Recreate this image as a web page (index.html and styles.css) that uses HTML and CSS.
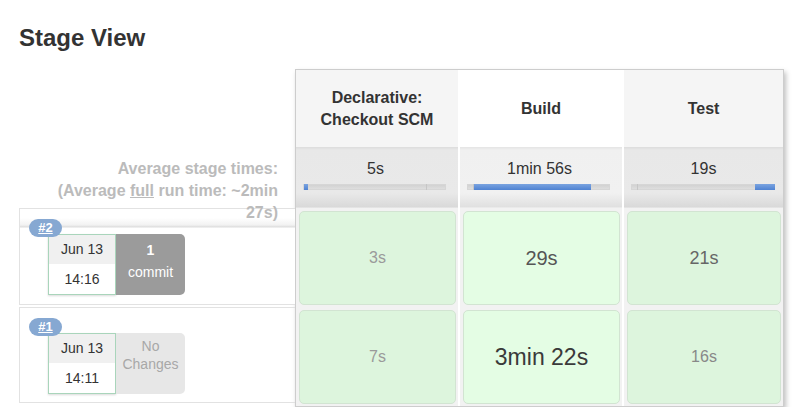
FILE: index.html
```html
<!DOCTYPE html>
<html>
<head>
<meta charset="utf-8">
<link rel="stylesheet" href="styles.css">
</head>
<body>
<h2 class="title">Stage View</h2>
<div class="stage-view">
  <div class="builds">
    <div class="builds-head"></div>
    <div class="avg-label">Average stage times:<br>(Average <u>full</u> run time: ~2min 27s)</div>
    <div class="build-row first">
      <a class="badge">#2</a>
      <div class="build-info">
        <div class="date">
          <div class="date-day">Jun 13</div>
          <div class="date-time">14:16</div>
        </div>
        <div class="changes commit"><b>1</b><br>commit</div>
      </div>
    </div>
    <div class="build-row">
      <a class="badge">#1</a>
      <div class="build-info">
        <div class="date">
          <div class="date-day">Jun 13</div>
          <div class="date-time">14:11</div>
        </div>
        <div class="changes none">No<br>Changes</div>
      </div>
    </div>
  </div>
  <div class="panel">
    <div class="grid">
      <div class="head">Declarative:<br>Checkout SCM</div>
      <div class="head hl">Build</div>
      <div class="head">Test</div>

      <div class="avg"><div class="avg-time">5s</div><div class="bar"><span class="fill" style="left:0;width:4px"></span><span class="mark" style="left:122px"></span></div></div>
      <div class="avg hl"><div class="avg-time">1min 56s</div><div class="bar"><span class="fill" style="left:5px;width:118px"></span><span class="mark" style="left:5px"></span></div></div>
      <div class="avg"><div class="avg-time">19s</div><div class="bar"><span class="fill" style="left:123px;width:20px"></span><span class="mark" style="left:5px"></span></div></div>

      <div class="cell"><div class="box"><span class="v s16 c9">3s</span></div></div>
      <div class="cell hl"><div class="box"><span class="v s20 c5">29s</span></div></div>
      <div class="cell"><div class="box"><span class="v s18 c6">21s</span></div></div>

      <div class="cell"><div class="box"><span class="v s16 c9">7s</span></div></div>
      <div class="cell hl"><div class="box"><span class="v s23 c3">3min 22s</span></div></div>
      <div class="cell"><div class="box"><span class="v s16 c8">16s</span></div></div>
    </div>
  </div>
</div>
</body>
</html>
```
FILE: styles.css
```css
html, body {
  margin: 0;
  padding: 0;
  background: #fff;
  font-family: "Liberation Sans", Arial, sans-serif;
  color: #333;
}

.title {
  margin: 24px 0 17px 19px;
  font-size: 24px;
  line-height: 28px;
  font-weight: bold;
  color: #333;
}

.stage-view {
  display: flex;
  align-items: flex-start;
  padding-left: 19px;
}

.builds {
  width: 276px;
  display: flex;
  flex-direction: column;
  gap: 2px;
}

.builds-head {
  height: 76px;
}

.avg-label {
  position: relative;
  z-index: 3;
  height: 61px;
  margin-bottom: -2px;
  box-sizing: border-box;
  padding: 11px 17px 0 19px;
  text-align: right;
  font-size: 16px;
  line-height: 22px;
  font-weight: bold;
  color: #bbb;
}

.avg-label u {
  text-decoration: underline;
}

.build-row {
  position: relative;
  height: 97px;
  box-sizing: border-box;
  border: 1px solid #e2e2e2;
  border-right: none;
  padding: 25px 0 0 28px;
}

.build-row + .build-row {
  height: 96px;
}

.build-row.first {
  background: linear-gradient(to bottom, #fff 0, #fff 9px, #f2f2f2 16px, #dcdcdc 18px, #fff 19px, #fff 100%);
}

.badge {
  position: absolute;
  left: 9px;
  top: 10px;
  z-index: 2;
  width: 33px;
  height: 18px;
  border-radius: 9px;
  background: #86a8d2;
  color: #fff;
  font-size: 13px;
  line-height: 18px;
  font-weight: bold;
  text-align: center;
  text-decoration: underline;
}

.build-info {
  display: flex;
}

.date {
  width: 68px;
  height: 61px;
  box-sizing: border-box;
  border: 1px solid #a9d5bb;
  box-shadow: 0 1px 2px rgba(0, 0, 0, 0.15);
  font-size: 14px;
  color: #333;
  text-align: center;
}

.date-day {
  height: 29px;
  line-height: 29px;
  background: #f0f0f0;
}

.date-time {
  height: 30px;
  line-height: 30px;
  background: #fff;
}

.changes {
  width: 69px;
  height: 61px;
  box-sizing: border-box;
  border-radius: 0 5px 5px 0;
  text-align: center;
  font-size: 14px;
}

.commit {
  background: #9b9b9b;
  color: #fff;
  padding-top: 5px;
  line-height: 22px;
}

.none {
  background: #e7e7e7;
  color: #a8a8a8;
  padding-top: 4px;
  line-height: 18px;
}

.panel {
  width: 487px;
  border: 1px solid #cdcdcd;
  background: #fff;
  box-shadow: 2px 3px 5px rgba(0, 0, 0, 0.25);
}

.grid {
  display: grid;
  grid-template-columns: 162px 162px 159px;
  grid-template-rows: 77px 61px 99px 99px;
  column-gap: 2px;
  background: #fff;
}

.head {
  display: flex;
  align-items: center;
  justify-content: center;
  text-align: center;
  background: #f5f5f5;
  font-size: 16px;
  line-height: 22px;
  font-weight: bold;
  color: #333;
}

.head.hl {
  background: #fff;
}

.avg {
  box-sizing: border-box;
  padding: 11px 0 0 7px;
  background: linear-gradient(to bottom, #dcdcdc 0, #e8e8e8 3px, #e9e9e9 46px, #d9d9d9 60px, #eee 61px);
}

.avg.hl {
  background: linear-gradient(to bottom, #e4e4e4 0, #f0f0f0 3px, #f1f1f1 46px, #e0e0e0 60px, #f4f4f4 61px);
}

.avg-time {
  width: 143px;
  text-align: center;
  font-size: 16px;
  line-height: 22px;
  color: #333;
  margin-left: 1px;
}

.bar {
  position: relative;
  width: 143px;
  height: 6px;
  margin-top: 4px;
  box-sizing: border-box;
  background: linear-gradient(to bottom, #d2d2d2, #dedede);
  border: 1px solid #d6d6d6;
}

.fill {
  position: absolute;
  top: -1px;
  bottom: -1px;
  background: linear-gradient(to bottom, #7aa3e0, #4f82d2);
}

.mark {
  position: absolute;
  top: -1px;
  bottom: -1px;
  width: 1px;
  background: #c6c6c6;
}

.cell {
  box-sizing: border-box;
  padding: 3px 2px 2px 3px;
  background: #f2f2f2;
}

.box {
  height: 100%;
  box-sizing: border-box;
  border: 1px solid #d2e4d2;
  border-radius: 5px;
  background: #ddf5dd;
  display: flex;
  align-items: center;
  justify-content: center;
}

.cell.hl .box {
  background: #e4fde4;
}

.v { line-height: 1; }
.s16 { font-size: 16px; }
.s18 { font-size: 18px; }
.s20 { font-size: 20px; }
.s23 { font-size: 23px; }
.c9 { color: #9a9a9a; }
.c8 { color: #888; }
.c6 { color: #666; }
.c5 { color: #555; }
.c3 { color: #3a3a3a; }
```
